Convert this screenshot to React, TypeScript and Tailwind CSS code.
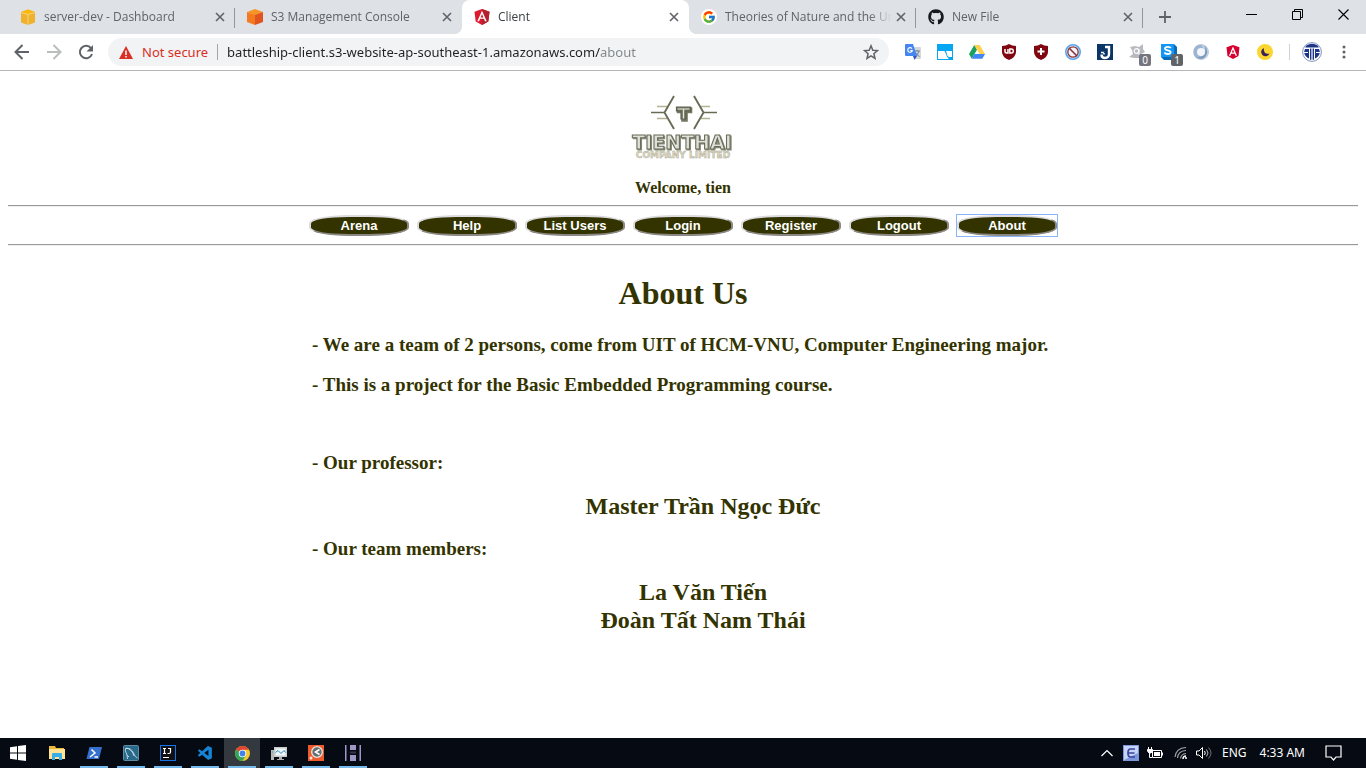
import React, { useState } from 'react';
import type { ReactNode } from 'react';
import { FaAngular, FaGithub } from 'react-icons/fa';
import { FcGoogle } from 'react-icons/fc';
import { VscVscode } from 'react-icons/vsc';

const uiFont = "font-['Noto_Sans','Open_Sans',sans-serif]";

function AwsCube({ top, left, right }: { top: string; left: string; right: string }) {
  return (
    <svg viewBox="0 0 16 16" className="size-4" aria-hidden="true">
      <path d="M8 0l8 3-8 3.500L0 3z" fill={top} />
      <path d="M0 3l8 3v10l-8-3z" fill={left} />
      <path d="M16 3l-8 3v10l8-3z" fill={right} />
    </svg>
  );
}

function ConsoleCube() {
  return (
    <svg viewBox="0 0 16 16" className="size-4" aria-hidden="true">
      <path d="M1 3l7-2.500 7 2.500v10.500L8 16l-7-2.500z" fill="#eeb22d" />
      <path d="M1 3l7-2.500L15 3 8 5.500z" fill="#fbb80c" />
      <path d="M1 3.500l7 2 7-2M8 5.500V16" stroke="#f8dc91" strokeWidth=".8" fill="none" />
    </svg>
  );
}

function AngularShield({ className }: { className: string }) {
  return (
    <svg viewBox="0 0 16 16" className={className} aria-hidden="true">
      <path d="M8 0l7.500 2.700-1.200 9.800L8 16l-6.300-3.500L.5 2.700z" fill="#dd1b2f" />
      <path d="M8 0l7.500 2.700-1.200 9.800L8 16z" fill="#b3202e" />
      <path d="M8 1.800L3.300 12.200h1.800l.9-2.400h4l.9 2.400h1.800zM8 5l1.400 3.400H6.600z" fill="#fff" />
    </svg>
  );
}

function Cross() {
  return (
    <svg viewBox="0 0 10 10" className="size-2.5" aria-hidden="true">
      <path d="M1 1l8 8M9 1L1 9" stroke="#5f6368" strokeWidth="1.600" />
    </svg>
  );
}

type Tab = { title: string; icon: ReactNode };

const tabs: Tab[] = [
  { title: 'server-dev - Dashboard', icon: <ConsoleCube /> },
  { title: 'S3 Management Console', icon: <AwsCube top="#f79428" left="#f37a20" right="#e0551d" /> },
  { title: 'Client', icon: <AngularShield className="size-4" /> },
  {
    title: 'Theories of Nature and the Uni',
    icon: (
      <span className="grid size-4 place-items-center rounded-full bg-white">
        <FcGoogle className="size-3.5" />
      </span>
    ),
  },
  { title: 'New File', icon: <FaGithub className="size-4 text-[#171a1d]" /> },
];

function TabStrip() {
  const active = 2;
  return (
    <div className="flex h-[34px] items-stretch bg-[#dee1e6] pl-2">
      <div role="tablist" aria-label="Open tabs" className="flex min-w-0">
        {tabs.map((tab, i) => {
          const isActive = i === active;
          const divider = !isActive && i + 1 !== active;
          return (
            <div
              key={tab.title}
              className={`relative flex w-[227px] min-w-0 items-center gap-1 pr-2.5 pl-3 ${isActive ? 'rounded-t-lg bg-white' : ''}`}
            >
              <button
                type="button"
                role="tab"
                aria-selected={isActive}
                className={`flex min-w-0 flex-1 items-center gap-2 text-left font-['Open_Sans',sans-serif] text-xs whitespace-nowrap ${isActive ? 'text-[#3c4043]' : 'text-[#5f6368]'}`}
              >
                <span className="shrink-0">{tab.icon}</span>
                <span className="min-w-0 flex-1 overflow-hidden [mask-image:linear-gradient(90deg,#000_86%,transparent)]">
                  {tab.title}
                </span>
              </button>
              <button type="button" aria-label={`Close ${tab.title}`} className="shrink-0">
                <Cross />
              </button>
              {divider && <span className="absolute top-2 right-0 h-5 w-px bg-[#93969a]" />}
              {isActive && (
                <>
                  <span className="absolute bottom-0 -left-2 size-2 bg-[radial-gradient(circle_at_0_0,transparent_8px,#fff_8px)]" />
                  <span className="absolute -right-2 bottom-0 size-2 bg-[radial-gradient(circle_at_100%_0,transparent_8px,#fff_8px)]" />
                </>
              )}
            </div>
          );
        })}
      </div>
      <button type="button" aria-label="New tab" className="grid w-11 place-items-center">
        <svg viewBox="0 0 12 12" className="size-3" aria-hidden="true">
          <path d="M6 0v12M0 6h12" stroke="#5f6368" strokeWidth="1.800" />
        </svg>
      </button>
      <div className="ml-auto flex h-7">
        <button type="button" aria-label="Minimize" className="grid w-[46px] place-items-center">
          <svg viewBox="0 0 11 11" className="size-[11px]"><path d="M0 5.500h11" stroke="#000" /></svg>
        </button>
        <button type="button" aria-label="Restore" className="grid w-[46px] place-items-center">
          <svg viewBox="0 0 11 11" className="size-[11px]" fill="none" stroke="#000">
            <path d="M.5 2.500h8v8h-8zM2.500 2.500v-2h8v8h-2" />
          </svg>
        </button>
        <button type="button" aria-label="Close window" className="grid w-[46px] place-items-center">
          <svg viewBox="0 0 11 11" className="size-[11px]"><path d="M.5 .5l10 10M10.500 .5l-10 10" stroke="#000" strokeWidth="1.100" /></svg>
        </button>
      </div>
    </div>
  );
}

function CountBadge({ value, tone }: { value: string; tone: string }) {
  return (
    <span className={`absolute -right-1.5 -bottom-1.5 grid h-3 w-3 place-items-center rounded-xs text-[10px] leading-3 text-white ${tone}`}>
      {value}
    </span>
  );
}

const extensions: { name: string; icon: ReactNode; badge?: { value: string; tone: string } }[] = [
  {
    name: 'Translate',
    icon: (
      <svg viewBox="0 0 16 16" className="size-4">
        <path d="M6 3h9q1 0 1 1v10q0 1-1 1h-5z" fill="#d4d8dc" />
        <path d="M9 7h6M12 6v1M14 7q-1 4-4 5M10.500 8.500q1 2.500 4 4" stroke="#6f8291" fill="none" />
        <path d="M1 0h7l4 12H1q-1 0-1-1V1q0-1 1-1z" fill="#4586f3" />
        <path d="M8 12h4l-2.500 4z" fill="#3455b5" />
        <path d="M7 4.700A2.300 2.300 0 1 0 7.300 6.500H5.200" stroke="#fff" strokeWidth="1.200" fill="none" />
      </svg>
    ),
  },
  {
    name: 'Window panes',
    icon: (
      <svg viewBox="0 0 16 16" className="size-4">
        <path d="M0 0h16v16H0z" fill="#06a7f2" />
        <path d="M1 7h6.500l1.500 3q.5 3 2.500 4v1H1z" fill="#fff" />
        <path d="M9 7h6v6h-3q-2-.5-2-3z" fill="#fff" />
      </svg>
    ),
  },
  {
    name: 'Drive',
    icon: (
      <svg viewBox="0 0 16 16" className="size-4">
        <path d="M5.300 1L0 10l2.700 4.700L8 5.700z" fill="#19a15f" />
        <path d="M5.300 1h5.400L16 10h-5.400z" fill="#ffd04b" />
        <path d="M5.400 10H16l-2.700 4.700H2.700z" fill="#4285f4" />
      </svg>
    ),
  },
  {
    name: 'Ad blocker',
    icon: (
      <svg viewBox="0 0 16 16" className="size-4">
        <path d="M8 0q3 2 7 2v6q0 5-7 8Q1 13 1 8V2q4 0 7-2z" fill="#800610" />
        <path d="M4 5v2.500q0 1.500 1.500 1.500H7V5" stroke="#fff" strokeWidth="1.500" fill="none" />
        <path d="M8.800 5h1.500a2 2 0 0 1 0 4H8.800z" stroke="#fff" strokeWidth="1.400" fill="none" />
      </svg>
    ),
  },
  {
    name: 'Protector',
    icon: (
      <svg viewBox="0 0 16 16" className="size-4">
        <path d="M8 0q3 2 7 2v6q0 5-7 8Q1 13 1 8V2q4 0 7-2z" fill="#800610" />
        <path d="M8 4v7M4.500 7.500h7" stroke="#fff" strokeWidth="2" />
      </svg>
    ),
  },
  {
    name: 'Script stopper',
    icon: (
      <svg viewBox="0 0 16 16" className="size-4" fill="none">
        <circle cx="8" cy="8" r="7.200" fill="#f4f6fa" stroke="#58a5ec" strokeWidth="1.600" />
        <circle cx="8" cy="8" r="5.200" stroke="#8b3038" strokeWidth="1.300" />
        <path d="M4.300 4.300l7.400 7.400" stroke="#8b3038" strokeWidth="1.600" />
      </svg>
    ),
  },
  {
    name: 'Journal',
    icon: (
      <svg viewBox="0 0 16 16" className="size-4" fill="none">
        <path d="M0 0h16v16H0z" fill="#0b3567" />
        <path d="M8 3h4v7q0 4-4 4-3.500 0-3.500-3.500" stroke="#fff" strokeWidth="2.400" />
        <path d="M4 8.500h3v2" stroke="#fff" strokeWidth="1.600" />
        <path d="M9 6.500L7 9" stroke="#0b3567" strokeWidth="1.200" />
      </svg>
    ),
  },
  {
    name: 'Fox tracker',
    icon: (
      <svg viewBox="0 0 16 16" className="size-4">
        <path d="M1 3l5-1 4 1 4-3v5l2 3-4 2-2 4H5l-5-1 4-3-1-4z" fill="#b8bac0" />
        <circle cx="7.500" cy="7" r="2.300" fill="none" stroke="#fff" strokeWidth="1.200" />
        <path d="M10 5v6" stroke="#fff" />
      </svg>
    ),
    badge: { value: '0', tone: 'bg-[#74757e]' },
  },
  {
    name: 'Style switcher',
    icon: (
      <svg viewBox="0 0 16 16" className="size-4">
        <path d="M0 0h13l3 3v13H3l-3-3z" fill="#066bbb" />
        <path d="M0 0h13v13H0z" fill="#1496f7" />
        <path d="M9.800 4Q9 2.700 6.700 2.800 4 2.900 4 4.600 4 6 6.700 6.400 9.700 6.800 9.600 8.500 9.400 10 6.700 10 4.300 10 3.400 8.500" stroke="#fff" strokeWidth="1.800" fill="none" />
      </svg>
    ),
    badge: { value: '1', tone: 'bg-[#606368]' },
  },
  {
    name: 'JSON viewer',
    icon: (
      <svg viewBox="0 0 16 16" className="size-4">
        <circle cx="8" cy="8" r="7.800" fill="#9db5d0" />
        <path d="M8 .2A7.800 7.800 0 0 1 10 15.500Q14 9 8 .2z" fill="#c3d2e3" />
        <path d="M11 1Q17 7 12 13 8 16 4 13q6 1 8-4 1-4-1-8z" fill="#7896b9" />
        <circle cx="8" cy="8" r="4" fill="#f2f6fb" />
      </svg>
    ),
  },
  { name: 'Angular inspector', icon: <FaAngular className="size-4 text-[#d5002f]" /> },
  {
    name: 'Night mode',
    icon: (
      <svg viewBox="0 0 16 16" className="size-4">
        <circle cx="8" cy="8" r="8" fill="#fbd62e" />
        <path d="M7 4a4.300 4.300 0 1 0 5.500 5.500Q9.500 10.500 7.700 8.500 6 6.500 7 4z" fill="#3a2159" />
      </svg>
    ),
  },
];

function Toolbar() {
  const [url, setUrl] = useState('battleship-client.s3-website-ap-southeast-1.amazonaws.com/about');
  return (
    <div className="flex h-[37px] items-center border-b border-[#b6b6b6] bg-white pr-3 pl-3.5">
      <div className="flex w-[94px] items-center gap-4">
        <button type="button" aria-label="Back">
          <svg viewBox="0 0 16 16" className="size-4" fill="none" stroke="#5f6368" strokeWidth="2"><path d="M15 8H2M8.500 1L1.500 8l7 7" /></svg>
        </button>
        <button type="button" aria-label="Forward">
          <svg viewBox="0 0 16 16" className="size-4" fill="none" stroke="#babcbe" strokeWidth="2"><path d="M1 8h13M7.500 1l7 7-7 7" /></svg>
        </button>
        <button type="button" aria-label="Reload">
          <svg viewBox="0 0 16 16" className="size-4">
            <path d="M13 4.200A6.200 6.200 0 1 0 14 10" fill="none" stroke="#5f6368" strokeWidth="2" />
            <path d="M15 1v6.500H8.500z" fill="#5f6368" />
          </svg>
        </button>
      </div>
      <div className="flex h-7 min-w-0 flex-1 items-center rounded-full bg-[#f1f3f4] pr-2.5 pl-[11px] text-sm">
        <svg viewBox="0 0 14 13" className="mr-[9px] h-[13px] w-3.5 shrink-0" aria-hidden="true">
          <path d="M7 0l7 13H0z" fill="#d93025" />
          <path d="M7 4.500V9M7 10v1.500" stroke="#fff" strokeWidth="1.500" />
        </svg>
        <span className="shrink-0 text-[13px] text-[#d93025]">Not secure</span>
        <span className="mx-[9px] h-4 w-px shrink-0 bg-[#a3a6a9]" />
        <input
          aria-label="Address"
          value={url}
          onChange={(e) => setUrl(e.target.value)}
          className="min-w-0 flex-1 bg-[linear-gradient(90deg,#202124_373px,#80868b_373px)] bg-clip-text text-[13px] text-transparent caret-black outline-none"
        />
        <button type="button" aria-label="Bookmark this page">
          <svg viewBox="0 0 16 16" className="size-4" fill="none" stroke="#5f6368" strokeWidth="1.500">
            <path d="M8 1.800l1.800 4.400 4.700.4-3.600 3.100 1.100 4.600L8 11.800l-4 2.500 1.100-4.600L1.500 6.600l4.700-.4z" />
          </svg>
        </button>
      </div>
      <div className="ml-4 flex items-center gap-4">
        {extensions.map((ext) => (
          <button key={ext.name} type="button" aria-label={ext.name} className="relative">
            {ext.icon}
            {ext.badge && <CountBadge value={ext.badge.value} tone={ext.badge.tone} />}
          </button>
        ))}
      </div>
      <span className="mr-3 ml-4 h-4 w-px bg-[#d0d2d5]" />
      <button type="button" aria-label="Profile">
        <svg viewBox="0 0 20 20" className="size-5">
          <circle cx="10" cy="10" r="9.400" fill="#fff" stroke="#7286b8" strokeWidth=".9" />
          <path d="M4 3.800Q10-.5 16 3.800l.8 1.700H3.200z" fill="#1c3587" />
          <path d="M7 7v9.500Q2 14 2.200 9.500L3 7zM13 7v9.500q5-2.500 4.800-7L17 7z" fill="#1c3587" />
          <path d="M8 6.500h1.400v11.200H8zM10.600 6.500H12v11.200h-1.400z" fill="#1c3587" />
          <path d="M2 10.500h4M14 10.500h4" stroke="#fff" />
        </svg>
      </button>
      <button type="button" aria-label="Menu" className="ml-3 grid w-5 place-items-center">
        <svg viewBox="0 0 4 14" className="h-3.5 w-1" fill="#5f6368"><circle cx="2" cy="2" r="1.500" /><circle cx="2" cy="7" r="1.500" /><circle cx="2" cy="12" r="1.500" /></svg>
      </button>
    </div>
  );
}

function Logo() {
  return (
    <svg viewBox="0 0 112 68" className="h-[68px] w-28" role="img" aria-label="Tien Thai Company Limited">
      <g fill="none">
        <path d="M30 13.500h10M30 25.500h10M83 13.500H73M83 25.500H73" stroke="#b5b294" strokeWidth="1.600" />
        <path d="M24 19.500h13M90 19.500H77" stroke="#686b55" strokeWidth="1.700" />
        <path d="M47 3L37.500 19.500 47 36M67 3l9.500 16.500L67 36" stroke="#686b55" strokeWidth="1.900" />
        <path d="M50.500 15h14v4.500H60v8.500h-5v-8.500h-4.500z" fill="#747864" stroke="#747864" strokeWidth="1.600" />
        <path d="M49.500 14h14v4H59v8h-5v-8h-4.500z" fill="#747864" stroke="#5d604c" strokeWidth="1.200" />
        <path d="M50.500 16h12M56.500 16v9.500" stroke="#e6e7e0" strokeWidth="1.200" />
      </g>
      <g className="font-['DejaVu_Sans',sans-serif] font-bold" textAnchor="middle">
        <text x="55" y="56" fontSize="19" fill="#dfe0d8" stroke="#6a6e5a" strokeWidth="1.100" className="[filter:drop-shadow(1px_1px_0_#878a77)]">TIENTHAI</text>
        <text x="56" y="65" fontSize="9" fill="#dad8c6" stroke="#aaa78c" strokeWidth=".4">COMPANY LIMITED</text>
      </g>
    </svg>
  );
}

const navItems = ['Arena', 'Help', 'List Users', 'Login', 'Register', 'Logout', 'About'];

function Rule() {
  return <hr className="w-full border-t border-b border-t-[#9a9a9a] border-b-[#eeeeee]" />;
}

function AboutPage() {
  return (
    <main className="flex flex-1 flex-col items-center bg-white px-2 pt-[22px] pb-8 font-['Liberation_Serif',serif] font-bold text-[#333300]">
      <Logo />
      <p className="mt-[18px] mb-2 text-base leading-[18px]">Welcome, tien</p>
      <Rule />
      <nav aria-label="Main" className="my-2 flex flex-wrap justify-center gap-2">
        {navItems.map((item) => (
          <span key={item} className={`flex ${item === 'About' ? 'outline-1 outline-[#8ab4f8]' : ''}`}>
            <button
              type="button"
              className="h-[21px] w-[100px] rounded-[40%] border-2 border-t-[#dcdce0] border-r-[#8b8784] border-b-[#8b8784] border-l-[#dcdce0] bg-[#333300] font-['Liberation_Sans',sans-serif] text-[13px] leading-4 font-bold text-white"
            >
              {item}
            </button>
          </span>
        ))}
      </nav>
      <Rule />
      <h1 className="mt-[29px] text-[32px] leading-9">About Us</h1>
      <div className="w-full max-w-[822px] pt-[23px] pl-10 text-[19px] leading-[22px]">
        <h3>- We are a team of 2 persons, come from UIT of HCM-VNU, Computer Engineering major.</h3>
        <h3 className="mt-[18px]">- This is a project for the Basic Embedded Programming course.</h3>
        <h3 className="mt-14">- Our professor:</h3>
        <h2 className="mt-[18px] text-center text-2xl leading-7">Master Trần Ngọc Đức</h2>
        <h3 className="mt-[18px]">- Our team members:</h3>
        <h2 className="mt-[18px] text-center text-2xl leading-7">
          La Văn Tiến
          <br />
          Đoàn Tất Nam Thái
        </h2>
      </div>
    </main>
  );
}

const taskApps: { name: string; running: boolean; active?: boolean; icon: ReactNode }[] = [
  {
    name: 'File Explorer',
    running: false,
    icon: (
      <svg viewBox="0 0 16 16" className="size-4">
        <path d="M0 1h6l1 2h8v3H0z" fill="#e9b837" />
        <path d="M0 4h16v10H0z" fill="#ffe294" />
        <path d="M3 15V9q0-1 1-1h8q1 0 1 1v6h-3v-3H6v3z" fill="#38aee8" />
      </svg>
    ),
  },
  {
    name: 'PowerShell',
    running: true,
    icon: (
      <svg viewBox="0 0 16 14" className="h-3.5 w-4" fill="none">
        <path d="M3.500 1H16l-3 12H.5z" fill="#3570cf" />
        <path d="M5.500 3.500L9 7l-5 4M8.500 11h3.500" stroke="#fff" strokeWidth="1.500" />
      </svg>
    ),
  },
  {
    name: 'MySQL Workbench',
    running: true,
    icon: (
      <svg viewBox="0 0 16 16" className="size-4" fill="none">
        <rect x=".5" y=".5" width="15" height="15" rx="1" fill="#286889" stroke="#5d8ba1" />
        <path d="M4.500 14L4 10Q1.500 5 2.500 3.500 8 2 11 9q1 3 3.500 4M3 3q6 1 8 8M4 10l2 2" stroke="#c8dce6" strokeWidth=".9" />
      </svg>
    ),
  },
  {
    name: 'IntelliJ IDEA',
    running: true,
    icon: (
      <svg viewBox="0 0 16 16" className="size-4" fill="none">
        <rect x=".5" y=".5" width="15" height="15" fill="#111" stroke="#1773e8" />
        <path d="M3 3.500h3M4.500 3.500v5M3 8.500h3M8 3.500h2.500V7q0 1.500-1.500 1.500H7.500M3 12.500h6" stroke="#fff" strokeWidth="1.200" />
      </svg>
    ),
  },
  { name: 'Visual Studio Code', running: true, icon: <VscVscode className="size-[17px] text-[#1684d6]" /> },
  {
    name: 'Chrome',
    running: true,
    active: true,
    icon: (
      <svg viewBox="0 0 16 16" className="size-[15px]">
        <circle cx="8" cy="8" r="8" fill="#f7c92f" />
        <path d="M8 8L1.100 4A8 8 0 0 1 14.900 4H8z" fill="#e04435" />
        <path d="M8 8l3.500 2L8 16A8 8 0 0 1 1.100 4z" fill="#33a557" />
        <circle cx="8" cy="8" r="4" fill="#fff" />
        <circle cx="8" cy="8" r="3.100" fill="#4481e8" />
      </svg>
    ),
  },
  {
    name: 'System Monitor',
    running: true,
    icon: (
      <svg viewBox="0 0 16 16" className="size-4" fill="none">
        <path d="M0 5h3v10H0z" fill="#b5b8b6" />
        <path d="M3 2h13v10H3z" fill="#c8cbc9" />
        <path d="M4.500 3.500h10v7h-10z" fill="#eef9ff" />
        <path d="M4.500 7.500l2.500-2 3 3 3-3 1.500 2" stroke="#2882b2" />
        <path d="M8 12h3v2h2v1H6v-1h2z" fill="#aaa" />
        <path d="M1 7h1" stroke="#4a9" />
      </svg>
    ),
  },
  {
    name: 'Camera Tool',
    running: true,
    icon: (
      <svg viewBox="0 0 16 16" className="size-4" fill="none">
        <path d="M0 0h16v16H0z" fill="#ed5b2d" />
        <circle cx="9" cy="7" r="5.300" fill="#656d70" stroke="#e8e5df" strokeWidth="1.300" />
        <path d="M11.500 4.500L7.500 7l4 2.500" stroke="#fff" strokeWidth="1.600" />
        <circle cx="3" cy="13" r="1.500" fill="#f7e5de" />
      </svg>
    ),
  },
  {
    name: 'HeidiSQL',
    running: true,
    icon: (
      <svg viewBox="0 0 16 16" className="size-4">
        <path d="M0 0h1v16H0zM15 0h1v16h-1zM5 0h6v5H5zM5 10h6v6H5z" fill="#a096c6" />
        <path d="M1.500 0v16M14.500 0v16" stroke="#574d79" />
        <path d="M5 6.500h6v2H5z" fill="#373348" />
      </svg>
    ),
  },
];

function Taskbar() {
  return (
    <footer className="flex h-[30px] items-stretch bg-[#060b13] text-xs text-white">
      <button type="button" aria-label="Start" className="grid w-9 place-items-center">
        <svg viewBox="0 0 16 16" className="size-4" fill="#fff">
          <path d="M0 2.200L7 1.200v6.300H0zM8 1l8-1v7.500H8zM0 8.500h7v6.300l-7-1zM8 8.500h8V16l-8-1z" />
        </svg>
      </button>
      <div className="flex gap-px pl-[3px]">
        {taskApps.map((app) => (
          <button
            key={app.name}
            type="button"
            aria-label={app.name}
            className={`relative grid w-9 place-items-center ${app.active ? 'bg-[#34393f]' : ''}`}
          >
            {app.icon}
            {app.running && <span className="absolute inset-x-1 bottom-0 h-0.5 bg-[#76b9ed]" />}
          </button>
        ))}
      </div>
      <div className="ml-auto flex items-center pr-6">
        <button type="button" aria-label="Show hidden icons" className="mr-2.5">
          <svg viewBox="0 0 12 8" className="h-2 w-3" fill="none" stroke="#fff" strokeWidth="1.200"><path d="M.5 7L6 1.500 11.500 7" /></svg>
        </button>
        <button type="button" aria-label="Keyboard input" className="mr-2">
          <svg viewBox="0 0 16 16" className="size-4" fill="none">
            <rect width="16" height="16" fill="#7c96dc" />
            <path d="M1 1h14v7L1 15z" fill="#c4d3f7" />
            <path d="M12 4H7.500Q5 4 5 8t2.500 4H12M5 8h6.500" stroke="#39439b" strokeWidth="1.700" />
          </svg>
        </button>
        <svg viewBox="0 0 16 12" className="mr-[11px] h-3 w-4" fill="none" stroke="#fff" role="img" aria-label="Battery charging">
          <path d="M5.500 3.500h9v7h-9zM15.500 5.500v3M2.500 6v4.500H5M1.500 0v3M4.500 0v3" />
          <path d="M.5 2.500h5V4l-1.500 2h-2L.5 4z" fill="#fff" />
          <path d="M7 5h6v4H7z" fill="#fff" stroke="none" />
        </svg>
        <svg viewBox="0 0 14 14" className="mr-2 size-3.5" fill="none" stroke="#a4a7ab" strokeWidth="1.100" role="img" aria-label="Wireless">
          <path d="M1 11Q2 2 12 1.500M3.500 12Q4 5 12 4.500M6.500 12.500Q7 8 12 7.500" />
          <path d="M9 13q0-3 3-3M11 12h2" stroke="#fff" strokeWidth="1.500" />
        </svg>
        <svg viewBox="0 0 16 14" className="mr-2.5 h-3.5 w-4" fill="none" stroke="#fff" role="img" aria-label="Volume">
          <path d="M.5 5h2.500l3.500-3.500v11L3 9H.5z" />
          <path d="M8.500 5q1.500 2 0 4" />
          <path d="M10.500 3.500q3 3.500 0 7" stroke="#b7b9bc" />
          <path d="M12.500 1.500q5 5.500 0 11" stroke="#6e7277" />
        </svg>
        <span className="mr-[13px]">ENG</span>
        <time className="mr-5">4:33 AM</time>
        <button type="button" aria-label="Notifications">
          <svg viewBox="0 0 17 16" className="h-4 w-[17px]" fill="none" stroke="#fff" strokeWidth="1.200"><path d="M1 1h15v11h-5l-2.500 3L6 12H1z" /></svg>
        </button>
      </div>
    </footer>
  );
}

export default function App() {
  return (
    <div className="flex min-h-screen flex-col bg-white">
      <header className={uiFont}>
        <TabStrip />
        <Toolbar />
      </header>
      <AboutPage />
      <div className={uiFont}>
        <Taskbar />
      </div>
    </div>
  );
}
